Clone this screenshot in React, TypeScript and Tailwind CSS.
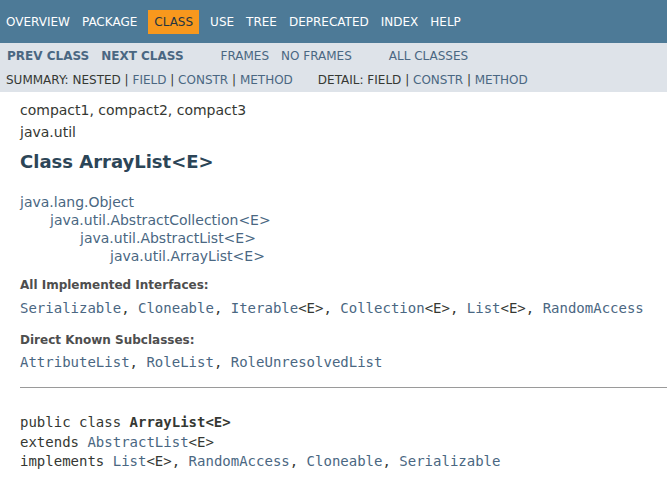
import React from "react";

const sans = "font-['DejaVu_Sans',Arial,sans-serif]";
const mono = "font-['DejaVu_Sans_Mono',monospace]";

const topItems = ["Overview", "Package", "Class", "Use", "Tree", "Deprecated", "Index", "Help"];

const Link = ({ children }: { children: React.ReactNode }) => (
  <span className="text-[#4A6782]">{children}</span>
);

const App = () => {
  return (
    <div className={`${sans} text-[14px] text-[#353833] bg-white min-h-[480px] w-[667px] overflow-hidden`}>
      {/* top nav */}
      <div className="bg-[#4D7A97] h-[43px] pt-[10px] text-[12px] leading-[14px] text-white">
        <ul className="flex">
          {topItems.map((item) =>
            item === "Class" ? (
              <li key={item} className="bg-[#F8981D] text-[#253441] uppercase px-[6px] py-[5px] mx-[5px]">
                {item}
              </li>
            ) : (
              <li key={item} className="uppercase px-[6px] py-[5px]">
                {item}
              </li>
            )
          )}
        </ul>
      </div>

      {/* sub nav */}
      <div className="bg-[#dee3e9] h-[49px] text-[12px] leading-[14px] uppercase">
        <div className="flex pt-[6px]">
          <ul className="flex mr-[25px]">
            <li className="pl-[7px] pr-[6px] font-bold text-[#4A6782]">Prev Class</li>
            <li className="px-[6px] font-bold text-[#4A6782]">Next Class</li>
          </ul>
          <ul className="flex mr-[25px]">
            <li className="px-[6px] text-[#4A6782]">Frames</li>
            <li className="px-[6px] text-[#4A6782]">No Frames</li>
          </ul>
          <ul className="flex">
            <li className="px-[6px] text-[#4A6782]">All Classes</li>
          </ul>
        </div>
        <div className="flex pt-[10px] pl-[6px]">
          <div className="mr-[25px] whitespace-pre">
            Summary: Nested | <Link>Field</Link> | <Link>Constr</Link> | <Link>Method</Link>
          </div>
          <div className="whitespace-pre">
            Detail: Field | <Link>Constr</Link> | <Link>Method</Link>
          </div>
        </div>
      </div>

      {/* content */}
      <div className="pl-[20px] pt-[9px]">
        <div className="leading-[18px]">compact1, compact2, compact3</div>
        <div className="leading-[18px] mt-[4px]">java.util</div>
        <h2 className="text-[18px] font-bold text-[#2c4557] leading-[22px] mt-[10px]">Class ArrayList&lt;E&gt;</h2>

        <ul className="mt-[20px] leading-[18px] text-[#4A6782]">
          <li>java.lang.Object</li>
          <li className="pl-[30px]">java.util.AbstractCollection&lt;E&gt;</li>
          <li className="pl-[60px]">java.util.AbstractList&lt;E&gt;</li>
          <li className="pl-[90px]">java.util.ArrayList&lt;E&gt;</li>
        </ul>

        <dl className="mt-[13px]">
          <dt className="text-[12px] font-bold text-[#4E4E4E] leading-[14px]">All Implemented Interfaces:</dt>
          <dd className={`${mono} mt-[8px] leading-[17px] whitespace-pre`}>
            <Link>Serializable</Link>, <Link>Cloneable</Link>, <Link>Iterable</Link>&lt;E&gt;, <Link>Collection</Link>&lt;E&gt;, <Link>List</Link>&lt;E&gt;, <Link>RandomAccess</Link>
          </dd>
        </dl>

        <dl className="mt-[16px]">
          <dt className="text-[12px] font-bold text-[#4E4E4E] leading-[14px]">Direct Known Subclasses:</dt>
          <dd className={`${mono} mt-[7px] leading-[17px] whitespace-pre`}>
            <Link>AttributeList</Link>, <Link>RoleList</Link>, <Link>RoleUnresolvedList</Link>
          </dd>
        </dl>

        <hr className="mt-[16px] border-0 border-t border-[#9a9a9a]" />

        <pre className={`${mono} text-[14px] leading-[19.5px] mt-[25px]`}>
          public class <b className="font-bold">ArrayList&lt;E&gt;</b>
          {"\n"}extends <Link>AbstractList</Link>&lt;E&gt;
          {"\n"}implements <Link>List</Link>&lt;E&gt;, <Link>RandomAccess</Link>, <Link>Cloneable</Link>, <Link>Serializable</Link>
        </pre>
      </div>
    </div>
  );
};

export default App;
